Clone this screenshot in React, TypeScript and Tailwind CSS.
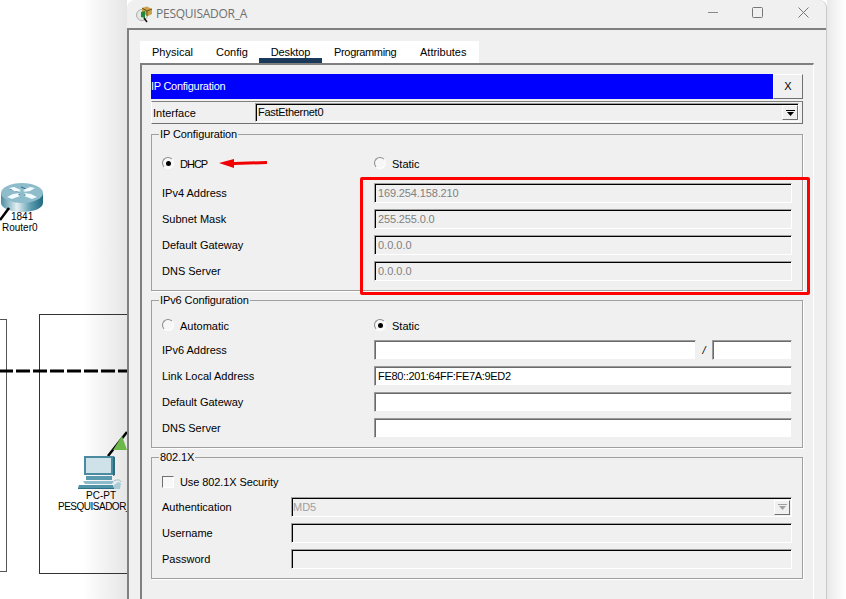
const sunken = 'border border-[#a0a0a0] border-r-white border-b-white shadow-[inset_1px_1px_0_#000]'
const sunkenOn = 'border border-[#9a9a9a] border-r-[#f0f0f0] border-b-[#f0f0f0] bg-white shadow-[inset_1px_1px_0_#6a6a6a]'
const raised = 'border border-white border-r-[#707070] border-b-[#707070]'

function Field({ value, on, tint, className = 'w-full' }: { value?: string; on?: boolean; tint?: boolean; className?: string }) {
  return (
    <div className={`flex h-5 items-center pl-[3px] ${on ? sunkenOn : sunken} ${tint ? 'text-[#808080]' : 'text-black'} ${className}`}>
      {value}
    </div>
  )
}

function Row({ label, width = 'w-[212px]', children }: { label: string; width?: string; children: React.ReactNode }) {
  return (
    <div className="flex h-[26px] items-center">
      <div className={`shrink-0 ${width}`}>{label}</div>
      <div className="flex min-w-0 flex-1 items-center">{children}</div>
    </div>
  )
}

function Radio({ label, checked, className = '', labelClass = '' }: { label: string; checked?: boolean; className?: string; labelClass?: string }) {
  return (
    <div className={`flex items-center gap-[6px] ${className}`}>
      <span className="mb-[2px] flex h-3 w-3 items-center justify-center rounded-full border border-[#8a8a8a] border-r-white border-b-white bg-[#f7f7f7]">
        {checked && <span className="h-[5px] w-[5px] rounded-full bg-black" />}
      </span>
      <span className={labelClass}>{label}</span>
    </div>
  )
}

function RadioRow({ children }: { children: React.ReactNode }) {
  return <div className="flex h-[22px] items-center">{children}</div>
}

function Group({ title, className, children }: { title: string; className: string; children: React.ReactNode }) {
  return (
    <fieldset className={`border border-[#a0a0a0] px-[10px] shadow-[1px_1px_0_#fff] ${className}`}>
      <legend className="-ml-[3px] px-px leading-[14px] tracking-[-0.1px]">{title}</legend>
      {children}
    </fieldset>
  )
}

function DropArrow({ disabled }: { disabled?: boolean }) {
  return (
    <span className={`flex h-[15px] w-4 items-center justify-center bg-[#f0f0f0] ${raised}`}>
      <svg width="9" height="6" viewBox="0 0 9 6">
        <rect x="0" y="0" width="9" height="1" fill={disabled ? '#a0a0a0' : '#000'} />
        <path d="M1 2h7L4.5 6z" fill={disabled ? '#a0a0a0' : '#000'} />
      </svg>
    </span>
  )
}

function RouterIcon() {
  return (
    <svg width="44" height="32" viewBox="0 0 44 32">
      <defs>
        <linearGradient id="rside" x1="0" x2="1" y1="0" y2="0">
          <stop offset="0" stopColor="#4d8ea3" />
          <stop offset="0.38" stopColor="#e4f0f4" />
          <stop offset="0.7" stopColor="#5f9db0" />
          <stop offset="1" stopColor="#1f6a80" />
        </linearGradient>
      </defs>
      <path d="M1 11v10c0 5 9 9 21 9s21-4 21-9V11z" fill="url(#rside)" />
      <ellipse cx="22" cy="11" rx="21" ry="10" fill="#8fbccb" />
      <g fill="none" stroke="#2d6f84" strokeWidth="1">
        <path d="M21 5l5 2M20 12l-9 3" />
        <path d="M10 7l9 3M33 16l-9-3" />
      </g>
      <g fill="#f2fbfd">
        <path d="M9 6l5-1 7 3-2 1 2 1-7-1-5-3z" />
        <path d="M35 6l-5-1-7 3 2 1-2 1 7-1 5-3z" />
        <path d="M7 15l6-3 7-1-2 2 2 1-8 3z" />
        <path d="M37 15l-6-3-7-1 2 2-2 1 8 3z" />
      </g>
    </svg>
  )
}

function PcIcon() {
  return (
    <svg width="44" height="36" viewBox="0 0 44 36">
      <path d="M6 1h29v19H6z" fill="#4a8ba0" />
      <path d="M35 1l2 1v18l-2 1z" fill="#2c6a7e" />
      <path d="M8 3h25v15H8z" fill="#cfe2ea" />
      <path d="M8 21h26v4H8z" fill="#5b9aae" />
      <path d="M5 26h31l-2 3H7z" fill="#8cbccb" />
      <path d="M1 30h34l1 3H0z" fill="#4f93a8" />
      <path d="M0 33h36v1H0z" fill="#2f7186" />
      <path d="M36 26c3-2 7-1 7 1" fill="none" stroke="#9bbdc8" strokeWidth="1" />
      <path d="M36 30l4-3 3 1-1 6h-6z" fill="#a9cbd6" />
    </svg>
  )
}

function TitleIcon() {
  return (
    <svg width="17" height="17" viewBox="0 0 17 17">
      <circle cx="6" cy="9" r="5.5" fill="#e4e8e6" stroke="#a9b0ad" strokeWidth="1" />
      <path d="M6 2l5-1.500 5 2.500v5l-4 2-6-3z" fill="#c9a24a" />
      <path d="M6 2l5 3 5-2M11 5v5" fill="none" stroke="#6d4c16" strokeWidth="1" />
      <path d="M5 6l4-1v7l-4-1z" fill="#1f8a3a" />
      <path d="M8 12l3 4" stroke="#111" strokeWidth="1.5" />
    </svg>
  )
}

export default function App() {
  return (
    <div className="flex h-[599px] w-[846px] overflow-hidden bg-white font-['Liberation_Sans',sans-serif] text-[11px] text-black">
      {/* Network canvas behind the window */}
      <div className="relative w-[127px] shrink-0 overflow-hidden bg-gradient-to-r from-white from-[65%] to-[#e6e6e6]">
        <div className="absolute left-[-10px] top-[319px] h-[253px] w-[17px] border border-[#555]" />
        <div className="absolute left-[39px] top-[314px] h-[260px] w-[100px] border border-[#333]" />
        <svg className="absolute left-0 top-[369px]" width="127" height="4">
          <line x1="0" y1="2" x2="127" y2="2" stroke="#000" strokeWidth="3" strokeDasharray="14 3" strokeDashoffset="1" />
        </svg>
        <div className="absolute left-0 top-[182px]"><RouterIcon /></div>
        <svg className="absolute left-0 top-[205px]" width="12" height="16">
          <line x1="0" y1="15" x2="9" y2="3" stroke="#000" strokeWidth="2.5" />
        </svg>
        <div className="absolute left-[11px] top-[211px] text-[10px] leading-[12px]">1841</div>
        <div className="absolute left-[2px] top-[222px] text-[10px] leading-[12px]">Router0</div>
        <svg className="absolute left-[105px] top-[430px]" width="22" height="28">
          <line x1="3" y1="26" x2="22" y2="2" stroke="#000" strokeWidth="2.5" />
          <path d="M8 20l9-14 5 14z" fill="#6cb84a" />
        </svg>
        <div className="absolute left-[78px] top-[455px]"><PcIcon /></div>
        <div className="absolute left-[86px] top-[490px] text-[10px] leading-[12px]">PC-PT</div>
        <div className="absolute left-[58px] top-[501px] whitespace-nowrap text-[10px] leading-[12px] tracking-[-0.5px]">PESQUISADOR_A</div>
      </div>

      {/* Device window */}
      <div className="relative flex w-[700px] shrink-0 flex-col rounded-tl-lg rounded-tr-lg border-r border-[#c8c8c8] bg-[#f0f0f0]">
        <div className="flex h-7 shrink-0 items-center pl-[9px]">
          <TitleIcon />
          <span className="ml-[3px] font-['Open_Sans',sans-serif] text-xs tracking-[-0.25px] text-[#6f6f6f]">PESQUISADOR_A</span>
          <div className="mb-1 ml-auto flex items-center">
            <svg className="mr-[33px]" width="11" height="11" viewBox="0 0 11 11"><path d="M0 5.500h10" stroke="#888" /></svg>
            <svg className="mr-[35px]" width="11" height="11" viewBox="0 0 11 11"><rect x="0.500" y="0.500" width="10" height="10" rx="1" fill="none" stroke="#777" /></svg>
            <svg className="mr-[17px]" width="11" height="11" viewBox="0 0 11 11"><path d="M0.500 0.500l10 10M10.500 0.500l-10 10" stroke="#777" /></svg>
          </div>
        </div>

        <div className="flex min-h-0 flex-1 flex-col border-l-2 border-t-2 border-[#808080] pl-[11px] pt-[11px]">
          <div className="flex h-[22px] w-[339px] items-center bg-white pl-[12px]">
            <span className="w-[64px]">Physical</span>
            <span className="w-[43px]">Config</span>
            <span className="flex h-[22px] w-[63px] items-center justify-center border-b-[5px] border-[#1a3a5c] pt-[5px] tracking-[-0.1px]">Desktop</span>
            <span className="ml-[12px] w-[86px] tracking-[-0.33px]">Programming</span>
            <span>Attributes</span>
          </div>

          <div className="w-[674px] flex-1 border-l-2 border-t-2 border-r border-[#808080] border-r-white pl-[9px] pr-[10px] pt-[9px]">
            <div className="flex h-[25px]">
              <div className="flex flex-1 items-center bg-[#0000ff] tracking-[-0.27px] text-white">IP Configuration</div>
              <button className={`w-[30px] bg-[#f0f0f0] ${raised}`}>X</button>
            </div>

            <div className={`mt-[2px] flex h-[23px] items-center pl-px pr-[3px] ${raised} border-t-[#808080] border-l-white`}>
              <span className="w-[102px] shrink-0 pt-[2px]">Interface</span>
              <div className={`flex h-[19px] flex-1 items-center justify-between bg-[#f0f0f0] pl-[2px] ${sunken}`}>
                <span className="tracking-[-0.3px]">FastEthernet0</span>
                <DropArrow />
              </div>
            </div>

            <Group title="IP Configuration" className="mt-[3px] pb-[6px] pt-[12px]">
              <RadioRow>
                <Radio label="DHCP" checked className="w-[212px]" labelClass="tracking-[-1px]" />
                <Radio label="Static" />
              </RadioRow>
              <div className="mt-[5px]">
                <Row label="IPv4 Address"><Field value="169.254.158.210" tint className="w-full tracking-[-0.14px]" /></Row>
                <Row label="Subnet Mask"><Field value="255.255.0.0" tint className="w-full tracking-[-0.14px]" /></Row>
                <Row label="Default Gateway"><Field value="0.0.0.0" tint /></Row>
                <Row label="DNS Server"><Field value="0.0.0.0" tint /></Row>
              </div>
            </Group>

            <Group title="IPv6 Configuration" className="mt-[2px] pb-[6px] pt-[8px]">
              <RadioRow>
                <Radio label="Automatic" className="w-[212px]" />
                <Radio label="Static" checked />
              </RadioRow>
              <Row label="IPv6 Address">
                <Field on className="w-[322px]" />
                <span className="flex-1 text-center italic">/</span>
                <Field on className="w-[80px]" />
              </Row>
              <Row label="Link Local Address"><Field on value="FE80::201:64FF:FE7A:9ED2" className="w-full tracking-[-0.33px]" /></Row>
              <Row label="Default Gateway"><Field on /></Row>
              <Row label="DNS Server"><Field on /></Row>
            </Group>

            <Group title="802.1X" className="mt-[2px] pb-[6px] pt-[7px]">
              <div className="flex h-[22px] items-center gap-[6px]">
                <span className="h-3 w-3 border border-[#707070] border-r-white border-b-white bg-[#f8f8f8]" />
                <span className="tracking-[-0.1px]">Use 802.1X Security</span>
              </div>
              <div className="mt-px">
                <Row label="Authentication" width="w-[129px]">
                  <div className={`flex h-5 w-full items-center justify-between pl-px pr-px text-[#a0a0a0] ${sunken}`}>
                    <span>MD5</span>
                    <DropArrow disabled />
                  </div>
                </Row>
                <Row label="Username" width="w-[129px]"><Field /></Row>
                <Row label="Password" width="w-[129px]"><Field /></Row>
              </div>
            </Group>
          </div>
        </div>

        {/* Annotations drawn over the screenshot */}
        <svg className="absolute left-[92px] top-[157px]" width="50" height="12" viewBox="0 0 50 12">
          <path d="M0 6l15-4v3l33-1v3l-33 1v3z" fill="#f00000" />
        </svg>
        <div className="absolute left-[233px] top-[177px] h-[118px] w-[450px] rounded-[2px] border-[3px] border-[#ff0000]" />
      </div>

      <div className="flex-1 bg-gradient-to-r from-[#e9e9e9] to-white" />
    </div>
  )
}
